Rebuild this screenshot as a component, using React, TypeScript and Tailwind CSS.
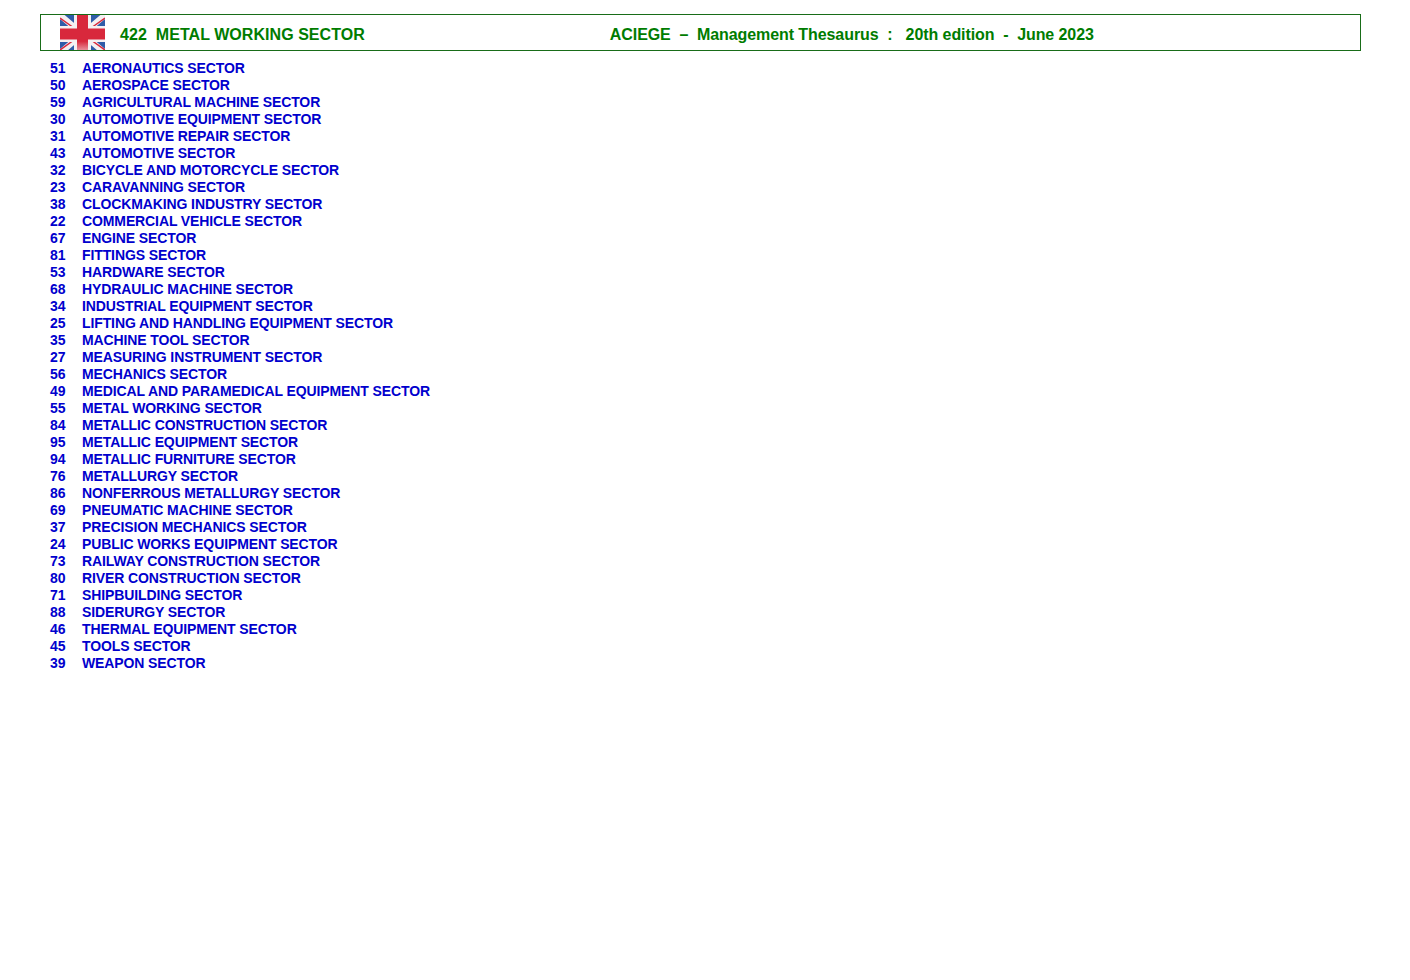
const sectors: [string, string][] = [
  ["51", "AERONAUTICS SECTOR"],
  ["50", "AEROSPACE SECTOR"],
  ["59", "AGRICULTURAL MACHINE SECTOR"],
  ["30", "AUTOMOTIVE EQUIPMENT SECTOR"],
  ["31", "AUTOMOTIVE REPAIR SECTOR"],
  ["43", "AUTOMOTIVE SECTOR"],
  ["32", "BICYCLE AND MOTORCYCLE SECTOR"],
  ["23", "CARAVANNING SECTOR"],
  ["38", "CLOCKMAKING INDUSTRY SECTOR"],
  ["22", "COMMERCIAL VEHICLE SECTOR"],
  ["67", "ENGINE SECTOR"],
  ["81", "FITTINGS SECTOR"],
  ["53", "HARDWARE SECTOR"],
  ["68", "HYDRAULIC MACHINE SECTOR"],
  ["34", "INDUSTRIAL EQUIPMENT SECTOR"],
  ["25", "LIFTING AND HANDLING EQUIPMENT SECTOR"],
  ["35", "MACHINE TOOL SECTOR"],
  ["27", "MEASURING INSTRUMENT SECTOR"],
  ["56", "MECHANICS SECTOR"],
  ["49", "MEDICAL AND PARAMEDICAL EQUIPMENT SECTOR"],
  ["55", "METAL WORKING SECTOR"],
  ["84", "METALLIC CONSTRUCTION SECTOR"],
  ["95", "METALLIC EQUIPMENT SECTOR"],
  ["94", "METALLIC FURNITURE SECTOR"],
  ["76", "METALLURGY SECTOR"],
  ["86", "NONFERROUS METALLURGY SECTOR"],
  ["69", "PNEUMATIC MACHINE SECTOR"],
  ["37", "PRECISION MECHANICS SECTOR"],
  ["24", "PUBLIC WORKS EQUIPMENT SECTOR"],
  ["73", "RAILWAY CONSTRUCTION SECTOR"],
  ["80", "RIVER CONSTRUCTION SECTOR"],
  ["71", "SHIPBUILDING SECTOR"],
  ["88", "SIDERURGY SECTOR"],
  ["46", "THERMAL EQUIPMENT SECTOR"],
  ["45", "TOOLS SECTOR"],
  ["39", "WEAPON SECTOR"],
];

function UkFlag() {
  return (
    <svg width="45" height="35" viewBox="0 0 45 35" className="shrink-0">
      <defs>
        <linearGradient id="redFade" x1="0" y1="0" x2="0" y2="1">
          <stop offset="0.75" stopColor="#d8283c" />
          <stop offset="1" stopColor="#e8909c" />
        </linearGradient>
      </defs>
      <rect width="45" height="35" fill="#2f5ca8" />
      <path d="M0 0 L22.5 19 L45 0 M0 38 L22.5 19 L45 38" fill="none" stroke="#f4f0f2" strokeWidth="6" />
      <path d="M0 3 L14 13 M45 35 L31 25 M45 3 L31 13 M0 35 L14 25" stroke="#d8283c" strokeWidth="1.5" />
      <rect x="14" width="17" height="35" fill="#f4f0f2" />
      <rect y="11" width="45" height="16" fill="#f4f0f2" />
      <rect x="17" width="11" height="35" fill="url(#redFade)" />
      <rect y="13.5" width="45" height="11" fill="#d8283c" />
    </svg>
  );
}

export default function App() {
  return (
    <div className="min-h-[980px] bg-white pt-[14px] pl-[40px] font-['Liberation_Sans',Arial,sans-serif] font-bold">
      <header className="flex h-[37px] w-[1321px] items-center border border-[#186c18] pl-[19px] text-base text-[#007c00]">
        <UkFlag />
        <span className="ml-[15px] mt-[5px] whitespace-pre tracking-[0.05px]">422  METAL WORKING SECTOR</span>
        <span className="ml-[245px] mt-[5px] whitespace-pre tracking-[-0.08px]">ACIEGE  –  Management Thesaurus  :   20th edition  -  June 2023</span>
      </header>
      <ul className="mt-[9px] pl-[10px] text-sm leading-[17px] text-[#0000cd]">
        {sectors.map(([code, name]) => (
          <li key={code} className="flex h-[17px]">
            <span className="w-[32px]">{code}</span>
            <span className="tracking-[-0.11px]">{name}</span>
          </li>
        ))}
      </ul>
    </div>
  );
}
